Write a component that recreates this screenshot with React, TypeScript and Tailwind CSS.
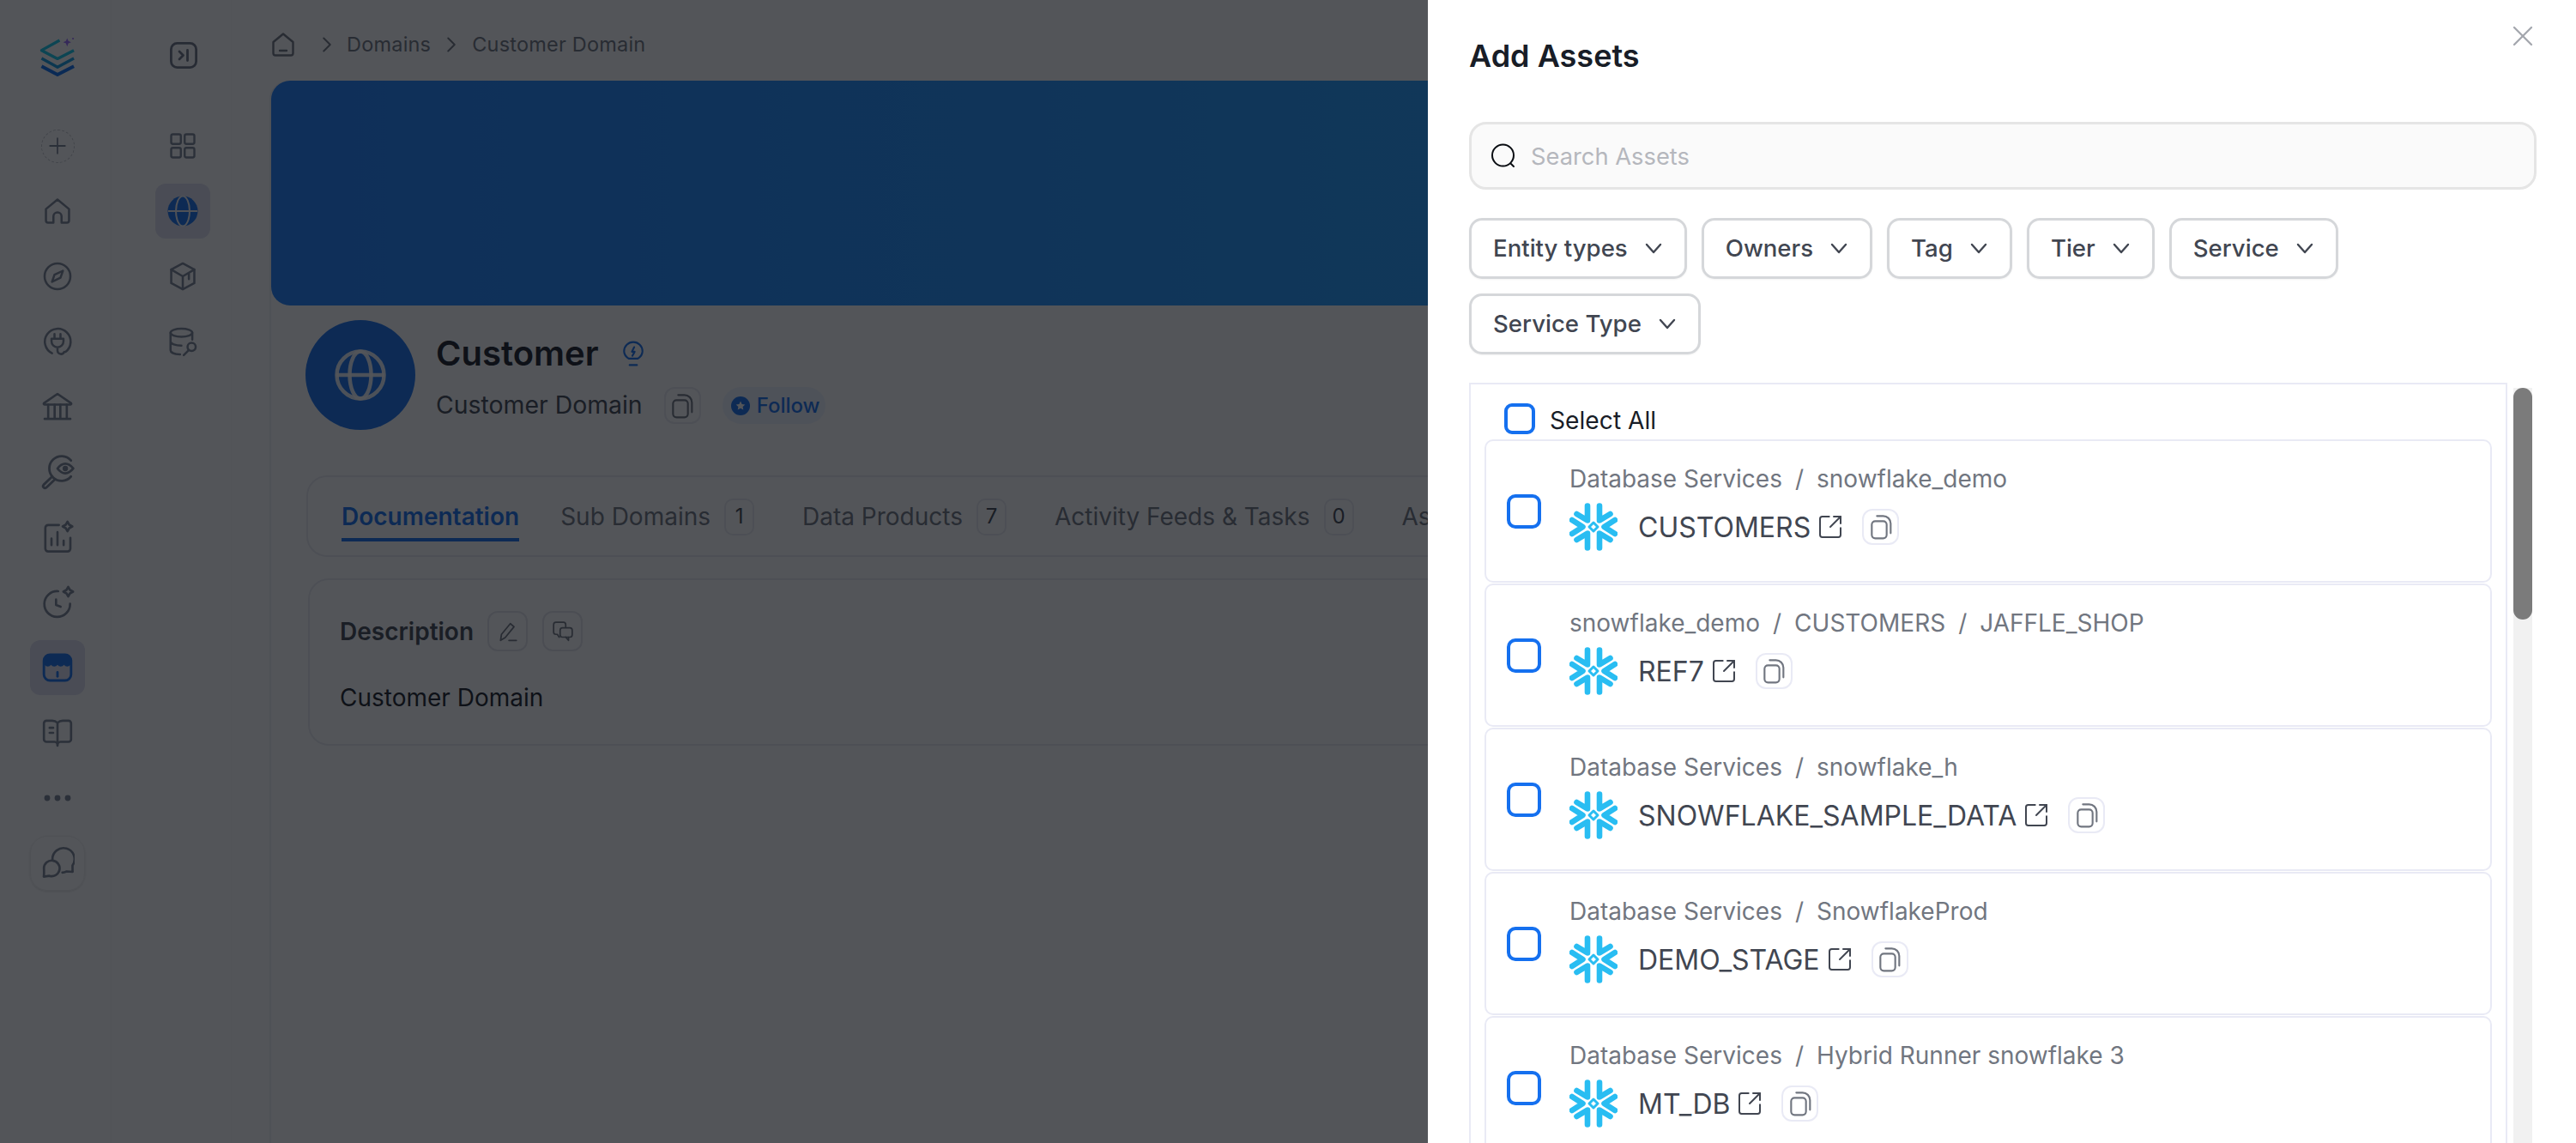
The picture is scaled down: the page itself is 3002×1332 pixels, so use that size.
import React from 'react';
import { ChevronRight, SquareArrowOutUpRight, X } from 'lucide-react';

type IconProps = { className?: string };

const Line: React.FC<React.PropsWithChildren<IconProps>> = ({ className, children }) => (
  <svg viewBox="0 0 24 24" fill="none" stroke="currentColor" strokeWidth={1.6} strokeLinecap="round" strokeLinejoin="round" className={className}>
    {children}
  </svg>
);

const Sparkle = ({ x, y }: { x: number; y: number }) => (
  <path d={`M${x} ${y - 3.4}l1.2 2.2 2.2 1.2-2.2 1.2-1.2 2.2-1.2-2.2-2.2-1.2 2.2-1.2z`} />
);

const CopyIcon = ({ className }: IconProps) => (
  <Line className={className}>
    <rect x="4" y="7" width="13" height="15" rx="3" />
    <path d="M8.500 2.500h5.500A6.500 6.500 0 0 1 20.500 9v8.500" />
  </Line>
);

const Logo = () => (
  <svg viewBox="0 0 44 47" fill="none" strokeWidth={3.4} strokeLinejoin="round" className="w-[43px] h-[46px]">
    <path d="M24 4 2.5 16 21.5 26 41 16" stroke="#12c8ea" />
    <path d="M2.5 25.5 21.5 36 41 25.5" stroke="#129ce0" />
    <path d="M2.5 35 21.5 45 41 35" stroke="#0d6ff0" strokeWidth={4} />
    <path d="M33 1.5l1.4 3.4 3.4 1.4-3.4 1.4L33 11.5l-1.4-3.8-3.4-1.4 3.4-1.4z" fill="#9b6bff" />
    <circle cx="40" cy="2" r="1.1" fill="#9b6bff" />
  </svg>
);

const primaryNav: { key: string; node: React.ReactNode; active?: boolean; boxed?: boolean }[] = [
  {
    key: 'add',
    node: (
      <div className="flex w-[39px] h-[39px] items-center justify-center rounded-full border border-dashed border-[#c5c7cc]">
        <svg viewBox="0 0 20 20" stroke="currentColor" strokeWidth={1.6} strokeLinecap="round" className="w-[22px] h-[22px]"><path d="M10 2v16M2 10h16" /></svg>
      </div>
    ),
  },
  {
    key: 'home',
    node: <Line className="w-[38px] h-[38px]"><path d="M3.5 10.5 12 3.5l8.5 7V19a1.5 1.5 0 0 1-1.5 1.5h-4v-4.5a3 3 0 0 0-6 0v4.5H5A1.5 1.5 0 0 1 3.5 19z" /></Line>,
  },
  {
    key: 'explore',
    node: <Line className="w-[38px] h-[38px]"><circle cx="12" cy="12" r="9.5" /><path d="M16 8l-1.8 5-6.2 3 1.8-5.2z" /></Line>,
  },
  {
    key: 'plug',
    node: (
      <Line className="w-[38px] h-[38px]">
        <path d="M8 20.6A9.5 9.5 0 1 1 18 19.6" />
        <path d="M9.8 6.5v3.5M14.2 6.5v3.5M7.6 10h8.8v1.8a4.4 4.4 0 0 1-8.8 0zM12 16.2v2.6a2.6 2.6 0 0 0 5 .8" />
      </Line>
    ),
  },
  {
    key: 'bank',
    node: (
      <Line className="w-[40px] h-[40px]">
        <path d="M2.5 9.5 12 3l9.5 6.5a.6.6 0 0 1-.4 1H2.9a.6.6 0 0 1-.4-1z" />
        <path d="M5.5 10.5v9M10 10.5v9M14 10.5v9M18.5 10.5v9M3 20.5h18" />
      </Line>
    ),
  },
  {
    key: 'search-eye',
    node: (
      <Line className="w-[42px] h-[42px]">
        <path d="M21 4.4A8.2 8.2 0 1 0 21 15" />
        <path d="M12 9.7s2.4-3.2 5.2-3.2 5.3 3.2 5.3 3.2-2.5 3.2-5.3 3.2S12 9.700 12 9.700z" />
        <circle cx="17.2" cy="9.700" r="1" fill="currentColor" />
        <path d="M8.500 15 2.800 20.500a1.300 1.300 0 0 0 1.900 1.800l5.700-5.400" />
      </Line>
    ),
  },
  {
    key: 'insights',
    node: (
      <Line className="w-[40px] h-[40px]">
        <path d="M13 3.500H5.500a2 2 0 0 0-2 2V20a2 2 0 0 0 2 2H19a2 2 0 0 0 2-2v-7.500" />
        <path d="M7.800 17.500v-4.500M12 17.500V8.500M16.300 17.500v-3" />
        <Sparkle x={19} y={4.500} />
      </Line>
    ),
  },
  {
    key: 'clock',
    node: (
      <Line className="w-[40px] h-[40px]">
        <path d="M12.500 4.200A9 9 0 1 0 20.800 13" />
        <path d="M11 10v3.800l3.200 1.200" />
        <Sparkle x={19.500} y={4.500} />
      </Line>
    ),
  },
  {
    key: 'store',
    active: true,
    node: (
      <svg viewBox="0 0 24 24" fill="none" className="w-[38px] h-[38px] text-[#1570ef]">
        <rect x="2" y="2.500" width="20" height="19" rx="4.500" stroke="currentColor" strokeWidth={1.800} />
        <path fill="currentColor" d="M2.500 6.500a4 4 0 0 1 4-4h11a4 4 0 0 1 4 4V10c-1.300 1.600-3.500 1.600-4.700 0-1.200 1.600-3.600 1.600-4.800 0-1.200 1.600-3.600 1.600-4.800 0-1.200 1.600-3.400 1.600-4.700 0z" />
        <path d="M12 15.500v3" stroke="currentColor" strokeWidth={1.800} strokeLinecap="round" />
      </svg>
    ),
  },
  {
    key: 'book',
    node: (
      <Line className="w-[40px] h-[40px]">
        <path d="M12 5C11 4 9.800 3.500 8.300 3.500H4.300A1.800 1.800 0 0 0 2.500 5.300v11.200a1.800 1.800 0 0 0 1.800 1.800H10c1 0 2 1 2 2.700 0-1.700 1-2.700 2-2.700h5.700a1.800 1.800 0 0 0 1.800-1.800V5.300a1.800 1.800 0 0 0-1.800-1.800h-4C14.200 3.500 13 4 12 5zv15.500" />
        <path d="M6.500 8.500h2.500M6.500 12h2.500" />
      </Line>
    ),
  },
  {
    key: 'more',
    node: (
      <svg viewBox="0 0 32 8" fill="currentColor" className="w-[32px] h-[8px]"><circle cx="4" cy="4" r="3.400" /><circle cx="16" cy="4" r="3.400" /><circle cx="28" cy="4" r="3.400" /></svg>
    ),
  },
  {
    key: 'chat',
    boxed: true,
    node: (
      <Line className="w-[40px] h-[40px]">
        <path d="M8.500 9.500A7.700 7.700 0 1 1 22.500 13.500c0 1.500 0 3.500.1 4.500l-4.200-.3c-1 .5-2 .8-3 .8" />
        <path d="M2.500 15.500a5.500 5.500 0 1 1 3.800 5.300l-3.900.6c.2-1.500.2-3.900.1-5.900z" />
      </Line>
    ),
  },
];

const secondaryNav: { key: string; node: React.ReactNode; active?: boolean }[] = [
  {
    key: 'grid',
    node: (
      <Line className="w-[36px] h-[36px]">
        <rect x="3" y="3" width="7.500" height="7.500" rx="1.300" /><rect x="13.500" y="3" width="7.500" height="7.500" rx="1.300" />
        <rect x="3" y="13.500" width="7.500" height="7.500" rx="1.300" /><rect x="13.500" y="13.500" width="7.500" height="7.500" rx="1.300" />
      </Line>
    ),
  },
  {
    key: 'globe',
    active: true,
    node: (
      <svg viewBox="0 0 36 36" className="w-[36px] h-[36px]">
        <circle cx="18" cy="18" r="17.500" fill="#1570ef" />
        <ellipse cx="18" cy="18" rx="8" ry="17.500" fill="none" stroke="#f2f2f5" strokeWidth={2} />
        <path d="M1 18h34" stroke="#f2f2f5" strokeWidth={2} />
      </svg>
    ),
  },
  {
    key: 'cube',
    node: (
      <Line className="w-[38px] h-[38px]">
        <path d="M12 2.500 20.500 7v10L12 21.500 3.500 17V7z" />
        <path d="M3.500 7 12 12l8.500-5M12 12v9.500M16.500 9.500v4.500" />
      </Line>
    ),
  },
  {
    key: 'db',
    node: (
      <Line className="w-[38px] h-[38px]">
        <ellipse cx="11" cy="5.500" rx="8" ry="3" />
        <path d="M3 5.500v13c0 1.700 3.300 2.800 7 3M19 5.500v5M3 12c0 1.700 3.600 3 8 3" />
        <circle cx="18.500" cy="16" r="3" />
        <path d="M16.500 18.200 12.700 22" />
      </Line>
    ),
  },
];

const tabs = [
  { label: 'Sub Domains', count: 1 },
  { label: 'Data Products', count: 7 },
  { label: 'Activity Feeds & Tasks', count: 0 },
];

const filters = ['Entity types', 'Owners', 'Tag', 'Tier', 'Service', 'Service Type'];

const assets = [
  { path: ['Database Services', 'snowflake_demo'], name: 'CUSTOMERS' },
  { path: ['snowflake_demo', 'CUSTOMERS', 'JAFFLE_SHOP'], name: 'REF7' },
  { path: ['Database Services', 'snowflake_h'], name: 'SNOWFLAKE_SAMPLE_DATA' },
  { path: ['Database Services', 'SnowflakeProd'], name: 'DEMO_STAGE' },
  { path: ['Database Services', 'Hybrid Runner snowflake 3'], name: 'MT_DB' },
];

const SnowflakeLogo = () => (
  <svg viewBox="0 0 56 56" fill="none" stroke="#29bdf2" strokeWidth={6.600} strokeLinecap="round" strokeLinejoin="round" className="w-[56px] h-[56px] shrink-0">
    <path d="M21 3.500V20.500L8.500 13M35 3.500V20.500L47.500 13" />
    <path d="M21 52.500V35.500L8.500 43M35 52.500V35.500L47.500 43" />
    <path d="M3 20 15.500 28 3 36M53 20 40.500 28 53 36" />
    <path d="M28 23 33 28 28 33 23 28z" strokeWidth={3} />
  </svg>
);

const Checkbox = ({ className }: IconProps) => (
  <span className={`block shrink-0 border-[4px] border-[#1570ef] bg-white ${className}`} />
);

const AssetCard = ({ path, name }: { path: string[]; name: string }) => (
  <div className="flex h-[167px] w-[1174px] shrink-0 rounded-[10px] border-2 border-[#e9eaf5] bg-white pl-[24px]">
    <Checkbox className="self-center w-[40px] h-[40px] rounded-[10px]" />
    <div className="ml-[33px] pt-[26px]">
      <div className="flex h-[36px] items-center gap-[15px] text-[28px] text-[#717680]">
        {path.map((part, i) => (
          <React.Fragment key={part}>
            {i > 0 && <span>/</span>}
            <span>{part}</span>
          </React.Fragment>
        ))}
      </div>
      <div className="mt-[10px] flex h-[56px] items-center">
        <SnowflakeLogo />
        <span className="ml-[24px] pt-[1px] text-[32px] leading-[56px] text-[#414651]">{name}</span>
        <SquareArrowOutUpRight className="ml-[7px] w-[32px] h-[32px] text-[#414651]" strokeWidth={1.500} />
        <button type="button" className="ml-[21px] flex w-[43px] h-[42px] items-center justify-center rounded-[12px] border-2 border-[#e9eaf5]">
          <CopyIcon className="w-[32px] h-[32px] text-[#717680]" />
        </button>
      </div>
    </div>
  </div>
);

export default function App() {
  return (
    <div className="relative flex w-[3002px] h-[1332px] overflow-hidden bg-white font-['Inter',sans-serif] antialiased">
      {/* primary nav */}
      <nav className="w-[130px] shrink-0 pl-[35px] text-[#7b8494] border-r border-[#f7f7f7]">
        <div className="h-[138px] pt-[43px] pl-[11px]">
          <Logo />
        </div>
        <div className="flex flex-col gap-[12px]">
          {primaryNav.map((item) => (
            <div
              key={item.key}
              className={`flex w-[64px] h-[64px] items-center justify-center rounded-[12px] ${item.active ? 'bg-[#dfe0f0]' : ''} ${item.boxed ? 'rounded-[20px] border border-[#f0f0f0] shadow-sm' : ''}`}
            >
              {item.node}
            </div>
          ))}
        </div>
      </nav>

      {/* secondary nav */}
      <nav className="w-[140px] shrink-0 pl-[51px] text-[#7b8494] border-r border-[#f7f7f7]">
        <div className="h-[138px] pt-[49px] pl-[17px] text-[#6b7483]">
          <svg viewBox="0 0 32 31" fill="none" stroke="currentColor" strokeWidth={2.800} strokeLinecap="round" strokeLinejoin="round" className="w-[32px] h-[31px]">
            <rect x="1.400" y="1.400" width="29.200" height="28.200" rx="7" />
            <path d="M11 11l4.500 4.500L11 20M20.500 9.500v12" />
          </svg>
        </div>
        <div className="flex flex-col gap-[12px]">
          {secondaryNav.map((item) => (
            <div key={item.key} className={`flex w-[64px] h-[64px] items-center justify-center rounded-[12px] ${item.active ? 'bg-[#dfe0f0]' : ''}`}>
              {item.node}
            </div>
          ))}
        </div>
      </nav>

      {/* page */}
      <main className="ml-[44px] w-[2000px] shrink-0">
        <div className="flex h-[94px] items-center pt-[10px] pl-[3px] text-[23.500px] text-[#717680] tracking-[0.2px]">
          <svg viewBox="0 0 26 28" fill="none" stroke="currentColor" strokeWidth={2.400} strokeLinecap="round" strokeLinejoin="round" className="w-[26px] h-[28px]">
            <path d="M1.500 11 13 1.500 24.500 11v13a2.500 2.500 0 0 1-2.500 2.500H4A2.500 2.500 0 0 1 1.500 24zM9 21h8" />
          </svg>
          <ChevronRight className="ml-[23px] w-[30px] h-[30px]" strokeWidth={1.600} />
          <span className="ml-[8px]">Domains</span>
          <ChevronRight className="ml-[9px] w-[30px] h-[30px]" strokeWidth={1.600} />
          <span className="ml-[9px]">Customer Domain</span>
        </div>

        <div className="h-[1238px] rounded-tl-[22px] border-l-2 border-[#eef0f5]">
          <div className="h-[262px] rounded-l-[22px] bg-gradient-to-r from-[#1b7fff] to-[#28a8ff]" />

          <div className="mt-[17px] ml-[40px] flex">
            <div className="flex w-[128px] h-[128px] items-center justify-center rounded-full bg-[#1570ef]">
              <svg viewBox="0 0 60 60" fill="none" stroke="#ffffff" strokeOpacity={0.9} strokeWidth={4.500} className="w-[60px] h-[60px]">
                <circle cx="30" cy="30" r="27.500" /><ellipse cx="30" cy="30" rx="12.500" ry="27.500" /><path d="M2 30h56" />
              </svg>
            </div>
            <div className="ml-[24px] pt-[15px]">
              <div className="flex h-[48px] items-center">
                <span className="text-[40px] font-semibold text-[#181d27]">Customer</span>
                <svg viewBox="0 0 24 28" fill="none" stroke="#1570ef" strokeWidth={2} strokeLinecap="round" strokeLinejoin="round" className="ml-[27px] w-[26px] h-[30px]">
                  <path d="M7 19.500C3.800 17.500 2 14.800 2 11.500a10 10 0 0 1 20 0c0 3.300-1.800 6-5 8zM8 26.500h8M13 7l-2.500 5h3L11 16.500" />
                </svg>
              </div>
              <div className="mt-[15px] flex h-[43px] items-center">
                <span className="text-[28.400px] text-[#414651]">Customer Domain</span>
                <button type="button" className="ml-[25px] flex w-[43px] h-[43px] items-center justify-center rounded-[12px] border-2 border-[#e9eaf0]">
                  <CopyIcon className="w-[32px] h-[32px] text-[#717680]" />
                </button>
                <div className="ml-[25px] flex h-[43px] w-[120px] items-center gap-[8px] rounded-full bg-[#eef4ff] pl-[10px]">
                  <svg viewBox="0 0 22 22" className="w-[22px] h-[22px]">
                    <circle cx="11" cy="11" r="11" fill="#1570ef" />
                    <path d="M11 5.500l1.600 3.500 3.700.4-2.700 2.500.7 3.700-3.300-1.800-3.300 1.800.7-3.700-2.700-2.500 3.700-.4z" fill="#ffffff" />
                  </svg>
                  <span className="text-[24px] font-medium text-[#1570ef]">Follow</span>
                </div>
              </div>
            </div>
          </div>

          {/* tabs */}
          <div className="mt-[53px] ml-[41px] h-[95px] rounded-[24px] border-2 border-[#eaecf0] pl-[39px] pt-[28px]">
            <div className="flex h-[36px] items-center gap-[48px] text-[28px] text-[#717680]">
              <div className="relative">
                <span className="font-semibold text-[#1570ef]">Documentation</span>
                <span className="absolute left-0 right-0 top-[46px] h-[4px] bg-[#1570ef]" />
              </div>
              {tabs.map((tab) => (
                <div key={tab.label} className="mr-[8px] flex items-center gap-[16px]">
                  <span>{tab.label}</span>
                  <span className="flex w-[35px] h-[43px] items-center justify-center rounded-[10px] border-2 border-[#eaecf0] text-[24px] text-[#414651]">{tab.count}</span>
                </div>
              ))}
              <span>Assets</span>
            </div>
          </div>

          {/* description */}
          <div className="mt-[25px] ml-[43px] h-[195px] rounded-[24px] border-2 border-[#eaecf0] pl-[35px] pt-[36px]">
            <div className="flex h-[47px] items-center">
              <span className="text-[28px] font-semibold text-[#414651]">Description</span>
              <button type="button" className="ml-[16px] flex w-[47px] h-[47px] items-center justify-center rounded-[12px] border-2 border-[#e4e5ea]">
                <Line className="w-[26px] h-[26px] text-[#717680]"><path d="M4 21.500 5 15 14.500 3.500 18.500 6.800 9 18.500zM13 21.500h8" /></Line>
              </button>
              <button type="button" className="ml-[17px] flex w-[47px] h-[47px] items-center justify-center rounded-[12px] border-2 border-[#e4e5ea]">
                <Line className="w-[26px] h-[26px] text-[#717680]"><path d="M15 7V4.500A2.500 2.500 0 0 0 12.500 2h-8A2.500 2.500 0 0 0 2 4.500v8A2.500 2.500 0 0 0 4.500 15H6l2 3" /><rect x="9" y="8" width="13" height="10" rx="2.500" /><path d="M15 18l3 3.500V18" /></Line>
              </button>
            </div>
            <p className="mt-[36px] text-[28px] leading-[36px] text-[#181d27]">Customer Domain</p>
          </div>
        </div>
      </main>

      {/* modal backdrop */}
      <div className="absolute inset-0 bg-[#0a0d12]/70" />

      {/* drawer */}
      <aside className="absolute top-0 right-0 flex h-full w-[1338px] flex-col bg-white pl-[48px] text-[#181d27]">
        <X className="absolute right-[42px] top-[22px] w-[40px] h-[40px] text-[#a4a7ae]" strokeWidth={1.400} />
        <h2 className="flex h-[142px] shrink-0 items-start pt-[44px] text-[36px] leading-[42px] font-semibold">Add Assets</h2>

        <div className="flex h-[79px] w-[1244px] shrink-0 items-center rounded-[20px] border-[3px] border-[#e5e5e5] bg-[#fafafa] pl-[22px]">
          <svg viewBox="0 0 30 30" fill="none" stroke="#0a0d12" strokeWidth={2} strokeLinecap="round" className="w-[30px] h-[30px]">
            <circle cx="14.500" cy="14" r="12.500" /><path d="M24 24l3 3" />
          </svg>
          <span className="ml-[17px] pt-[4px] text-[27.300px] text-[#b5b7bd]">Search Assets</span>
        </div>

        <div className="mt-[33px] flex w-[1244px] shrink-0 flex-wrap gap-[17px]">
          {filters.map((filter) => (
            <button
              key={filter}
              type="button"
              className="flex h-[71px] items-center gap-[20px] rounded-[15px] border-[3px] border-[#d5d7da] bg-white pl-[25px] pr-[26px] text-[27.600px] font-medium text-[#414651] shadow-xs"
            >
              <span className="pt-[1px]">{filter}</span>
              <svg viewBox="0 0 20 13" fill="none" stroke="currentColor" strokeWidth={2.400} strokeLinecap="round" strokeLinejoin="round" className="w-[20px] h-[13px]">
                <path d="M2 2l8 9 8-9" />
              </svg>
            </button>
          ))}
        </div>

        <div className="mt-[33px] flex min-h-0 flex-1 gap-[7px]">
          <div className="w-[1210px] overflow-hidden border-2 border-b-0 border-[#e9eaf5]">
            <div className="ml-[39px] flex h-[64px] items-start pt-[22px]">
              <Checkbox className="w-[36px] h-[36px] rounded-[9px]" />
              <span className="ml-[17px] pt-[2px] text-[28.200px] leading-[36px] text-[#181d27]">Select All</span>
            </div>
            <div className="ml-[16px] flex flex-col gap-[1px]">
              {assets.map((asset) => (
                <AssetCard key={asset.name} path={asset.path} name={asset.name} />
              ))}
            </div>
          </div>
          <div className="mt-[6px] w-[22px] bg-[#f1f1f1]">
            <div className="h-[270px] rounded-[11px] bg-[#7b7b7b]" />
          </div>
        </div>
      </aside>
    </div>
  );
}
